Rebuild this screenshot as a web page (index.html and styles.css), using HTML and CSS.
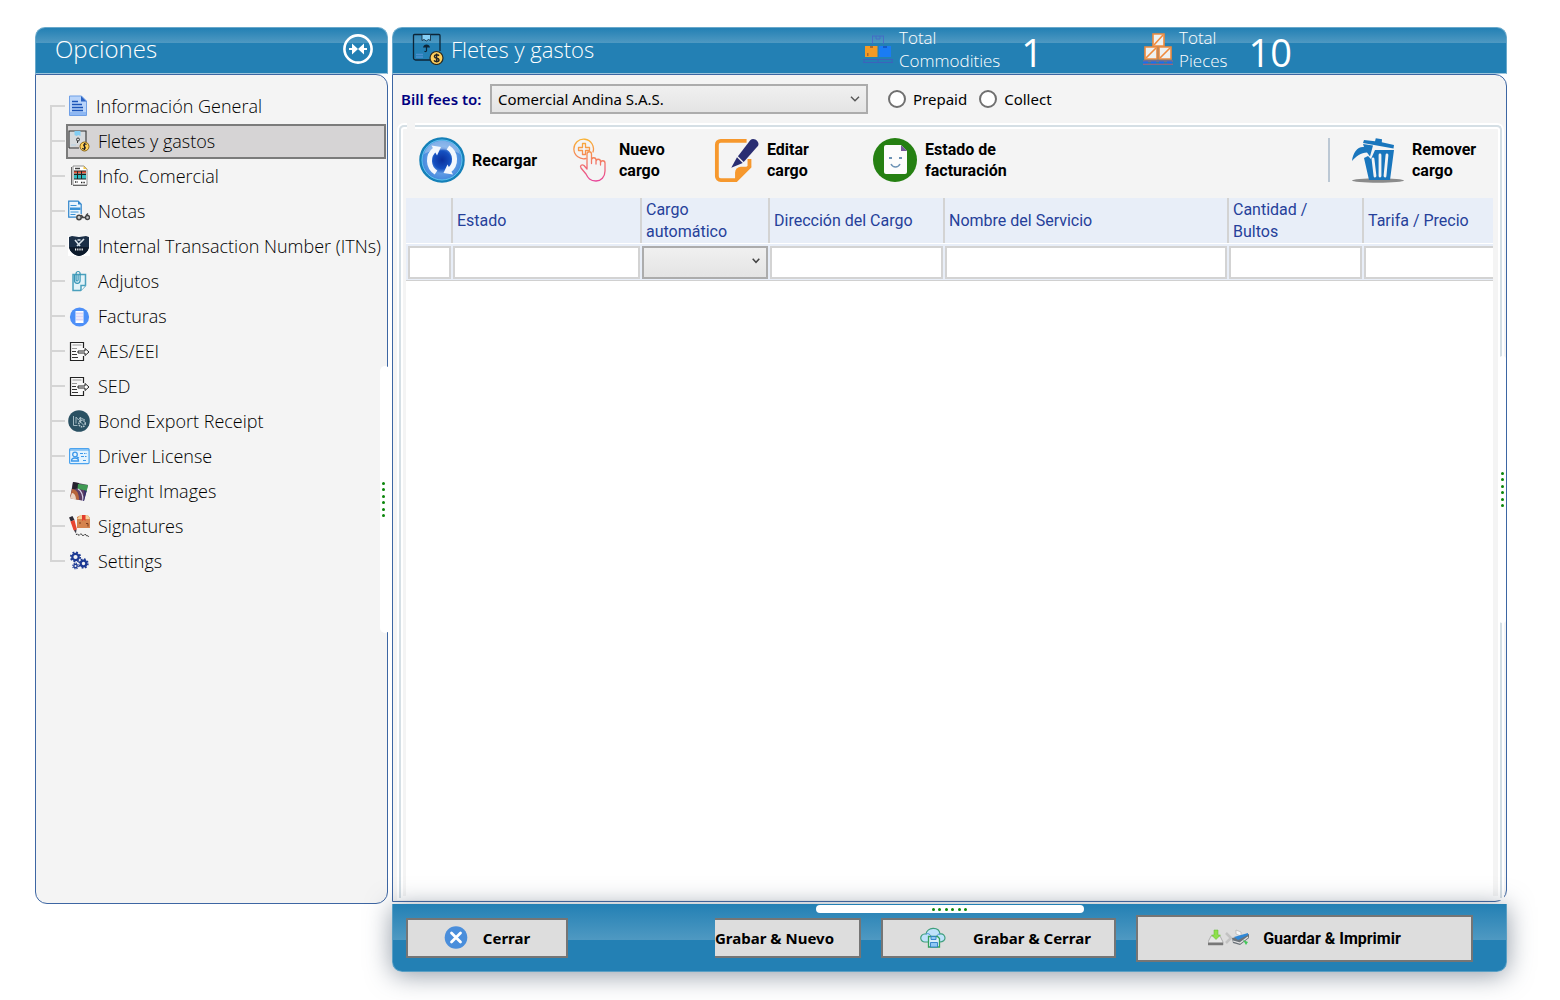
FILE: index.html
```html
<!DOCTYPE html>
<html lang="es">
<head>
<meta charset="utf-8">
<title>Fletes y gastos</title>
<link rel="stylesheet" href="styles.css">
</head>
<body>
<div class="app">
  <aside class="sidebar">
    <header class="bar sidebar-bar">
      <h2 class="bar-title">Opciones</h2>
      <button class="collapse" type="button" aria-label="Contraer">
        <svg width="32" height="32" viewBox="0 0 32 32"><circle cx="16" cy="16" r="13.6" fill="none" stroke="#fff" stroke-width="2.6"/><path d="M7 15h3v-4.500l6 5.500-6 5.500V17H7zM25 15h-3v-4.500L16 16l6 5.500V17h3z" fill="#fff"/></svg>
      </button>
    </header>
    <nav class="side-panel">
      <ul class="tree">
        <li><a class="item" href="#"><svg class="narrow" viewBox="0 0 20 22"><path d="M1.500 1h12l5 5v14.500h-17z" fill="#b9d4fa" stroke="#6f9fe6"/><path d="M13 1v5.500h5.500z" fill="#2b63c4"/><path d="M2 17h16v3H2z" fill="#8fb8f3"/><path d="M4 6.500h6M4 9.500h10M4 12.500h11M4 15.500h11" stroke="#1c54b8" stroke-width="1.300"/></svg>Información General</a></li>
        <li><a class="item selected" href="#"><svg viewBox="0 0 22 22"><path d="M1 18V1h17v11M1 18h10" fill="#d6dadd" stroke="#333" stroke-width="1.100"/><path d="M6.500 1h6v5l-2-1-2 1-2-1z" fill="#83cdf2"/><circle cx="10" cy="9.500" r="1.500" fill="none" stroke="#333"/><path d="M9.500 11v2" stroke="#333"/><path d="M3 15h5" stroke="#b4cfe2"/><circle cx="16.500" cy="16.500" r="4.500" fill="#ffd05a" stroke="#7d5a10" stroke-width=".9"/><path d="M18.500 14.500c-2-1.500-4 .5-2 2s0 3.500-2.200 1.800M16.500 13v7" fill="none" stroke="#222" stroke-width="1.100"/></svg>Fletes y gastos</a></li>
        <li><a class="item" href="#"><svg viewBox="0 0 22 22"><path d="M5 1h11l3 3v16H5z" fill="#fff" stroke="#777" stroke-width=".8"/><path d="M3.500 2v18M5 20.500h14" stroke="#666"/><path d="M7 3.500h5" stroke="#444" stroke-width="1.500"/><path d="M15.500 1l3.500 3h-3.500z" fill="#f6c744"/><path d="M6 6h12v8H6z" fill="#2fbcc0"/><path d="M6 6h12v2.500H6z" fill="#f0573c"/><path d="M6 6h12M6 9.500h12M6 14h12M9.500 6v8M13.500 6v8" stroke="#222"/><path d="M7 17h3M13 17.500h4" stroke="#222" stroke-width="1.600" stroke-dasharray="1 .6"/></svg>Info. Comercial</a></li>
        <li><a class="item" href="#"><svg viewBox="0 0 22 22"><path d="M.7 1.200h9.500l3 3v13H.7z" fill="#eaf5fd" stroke="#3186cc" stroke-width="1.200"/><path d="M10 1v3.500h3.500z" fill="#3186cc"/><path d="M2.500 5.500h6M2.500 12h8M2.500 14.500h5" stroke="#3a92d6"/><path d="M2 7.500h10.500v2.500H2z" fill="#3a92d6"/><path d="M8 14h6v6H8z" fill="#f4f4f4"/><circle cx="11" cy="17.500" r="2.200" fill="#ccc" stroke="#444" stroke-width="1.500"/><circle cx="19.500" cy="17.500" r="2" fill="#ccc" stroke="#444" stroke-width="1.400"/><path d="M13.500 17.500h4M13 15l2 2M18 15.500l2-2" stroke="#444" stroke-width="1.400"/></svg>Notas</a></li>
        <li><a class="item" href="#"><svg viewBox="0 0 22 22"><path d="M0 1h22v20H0z" fill="#fff"/><path d="M1 2l3-1 7 1 7-1 3 1v10c-1 5-5 8-10 9C6 20 2 17 1 12z" fill="#1b2f47"/><path d="M1 12c1 5 5 8 10 9 5-1 9-4 10-9z" fill="#0d1a2b"/><path d="M7 5l5 6M16 4l-7 7M9.500 5h3" stroke="#d8e2ea" stroke-width="1.600"/><path d="M7 14.500h8" stroke="#fff" stroke-width="2" stroke-dasharray="1.200 1"/></svg>Internal Transaction Number (ITNs)</a></li>
        <li><a class="item" href="#"><svg viewBox="0 0 22 22"><path d="M5 4.500h12.500v11l-5 5H5z" fill="#e3f3f9" stroke="#4aa0bd" stroke-width="1.500"/><path d="M17.500 15.500h-4.500v5" fill="#fff" stroke="#4aa0bd" stroke-width="1.500"/><path d="M6.500 5v5.500a2.800 2.800 0 0 0 5.600 0V3.500a2 2 0 0 0-4 0v6.500a1 1 0 0 0 2 0V5" fill="none" stroke="#3795b6" stroke-width="1.200"/></svg>Adjutos</a></li>
        <li><a class="item" href="#"><svg viewBox="0 0 22 22"><circle cx="11.500" cy="12" r="9.600" fill="#4d8ff8"/><path d="M7.500 6h8v12h-8z" fill="#fff"/><path d="M8 8.500h7M8 11.500h7M8 14.500h7" stroke="#ddd6f6" stroke-width="2"/></svg>Facturas</a></li>
        <li><a class="item" href="#"><svg viewBox="0 0 22 22"><path d="M15.500 8V2.500h-13v18h13V16" fill="#f9f9f9" stroke="#222" stroke-width="1.200"/><path d="M4.500 5h9M4 8.500h5" stroke="#999"/><path d="M4 11.500h4M4 14.500h5M4 17.500h6" stroke="#333" stroke-width="1.200"/><path d="M10 11h7V8.500l4 3.500-4 3.500V13h-7z" fill="#fff" stroke="#222"/></svg>AES/EEI</a></li>
        <li><a class="item" href="#"><svg viewBox="0 0 22 22"><path d="M15.500 8V2.500h-13v18h13V16" fill="#f9f9f9" stroke="#222" stroke-width="1.200"/><path d="M4.500 5h9M4 8.500h5" stroke="#999"/><path d="M4 11.500h4M4 14.500h5M4 17.500h6" stroke="#333" stroke-width="1.200"/><path d="M10 11h7V8.500l4 3.500-4 3.500V13h-7z" fill="#fff" stroke="#222"/></svg>SED</a></li>
        <li><a class="item" href="#"><svg viewBox="0 0 22 22"><circle cx="11" cy="11" r="10.800" fill="#2a5163"/><path d="M5.500 6v9.500h4M8 7v6.500M8 7l2.500 3 2-3v6" stroke="#9fb7c0" fill="none"/><circle cx="14" cy="13.500" r="3.200" fill="none" stroke="#b7c8cf" stroke-dasharray="1.500 .8" stroke-width="1.500"/><path d="M13 8l4 2M12.500 12l3 3" stroke="#9fb7c0"/></svg>Bond Export Receipt</a></li>
        <li><a class="item" href="#"><svg viewBox="0 0 22 22"><rect x="1.600" y="3.600" width="19.500" height="15" rx="1" fill="#e4f3fe" stroke="#4ba3ee" stroke-width="1.200"/><path d="M2 5h19" stroke="#4ba3ee"/><circle cx="7" cy="9.500" r="2.300" fill="none" stroke="#3b98ea" stroke-width="1.300"/><path d="M3.500 16c0-4 7-4 7 0zM9 12l2 1" fill="none" stroke="#3b98ea" stroke-width="1.300"/><path d="M12 8.500h7M13 11.500h6M15 15.500h4" stroke="#3b98ea" stroke-width="1.200" stroke-dasharray="3 1 1.500 1"/></svg>Driver License</a></li>
        <li><a class="item" href="#"><svg viewBox="0 0 22 22"><path d="M5 2l15 3-4 16-14-3z" fill="#5b3d63"/><path d="M5 2l6 1-1 5-6 2z" fill="#25222e"/><path d="M10 4l10 1-1.500 7c-3-3-6-2-9-3z" fill="#3f9a53"/><path d="M4 9c5 0 7 5 7 11l-9-2z" fill="#b8643a"/><path d="M4 13c3 0 4 4 4 7l-6-2z" fill="#ead3c4"/><path d="M10 9c4 2 5 6 5 12" fill="none" stroke="#d7d3ea" stroke-width="1.300"/><path d="M16 10c1 3 0 7-1 11l1-.2L18.700 11z" fill="#32306b"/></svg>Freight Images</a></li>
        <li><a class="item" href="#"><svg viewBox="0 0 22 22"><path d="M9 2l3-1.500h8L22 3v10H9z" fill="#d5834e"/><path d="M9 4l3-3.500h8L22 4z" fill="#f6cf97"/><path d="M14 0h3.500v6l-1.700-1.500L14 6z" fill="#e23b2c"/><path d="M11 8h2M18 8.500h2v3" stroke="#7d3d1e" fill="none"/><path d="M1 2.500L4.500 1l2 4-3.700 1.500z" fill="#2d2a36"/><path d="M2.500 6.500l4-1.500 2.300 9-1.300 2.500-2-1.500z" fill="#e8442f"/><path d="M6 15.500l2.500-1-.5 4z" fill="#3b3b48"/><path d="M8 19.500c2-1 2 1.500 4 0s2 2 4 .5 2 1 5 1.500" stroke="#222" fill="none" stroke-width="1.200" stroke-dasharray="1.500 .8"/></svg>Signatures</a></li>
        <li><a class="item" href="#"><svg viewBox="0 0 22 22" fill="none" stroke="#1d3a94"><circle cx="7.500" cy="7" r="3.200" stroke-width="2.200"/><circle cx="7.500" cy="7" r="4.700" stroke-width="1.800" stroke-dasharray="1.850"/><circle cx="15.500" cy="13.500" r="2.800" stroke-width="2.200"/><circle cx="15.500" cy="13.500" r="4.300" stroke-width="1.800" stroke-dasharray="1.690"/><circle cx="7.500" cy="16" r="1.700" stroke-width="1.400"/><circle cx="7.500" cy="16" r="2.800" stroke-width="1.200" stroke-dasharray="1.100"/></svg>Settings</a></li>
      </ul>
      <div class="grip grip-side"><i></i><i></i><i></i><i></i><i></i><i></i></div>
    </nav>
  </aside>

  <main class="main">
    <header class="bar main-bar">
      <div class="heading">
        <svg width="32" height="32" viewBox="0 0 32 32"><path d="M21 27H3.500a2 2 0 0 1-2-2V2.500a1 1 0 0 1 1-1h24.500a1 1 0 0 1 1 1V18" fill="none" stroke="#0d2537" stroke-width="1.300"/><path d="M10 1.500h8.500v6l-2-1-2.200 1.500L12 6.500l-2 1z" fill="#86d0f6" stroke="#0d2537" stroke-width=".8"/><path d="M14.500 12v6a1.200 1.200 0 0 1-2 0" fill="none" stroke="#0d2537" stroke-width="1.200"/><path d="M11 14.500c.5-4 6.500-4 7 0z" fill="#0d2537"/><path d="M4 21.500h7M4 24h7" stroke="#4c8fd0" stroke-width="1.300"/><circle cx="24.500" cy="25" r="6.500" fill="#ffcf5c" stroke="#2a2a20" stroke-width="1.200"/><path d="M27 22.800c-1.500-1.800-5-1-4.500 1s4.300 1 4.500 3-3.500 2.500-5 .5M24.600 20.500v9" fill="none" stroke="#222" stroke-width="1.400"/></svg>
        <h1 class="page-title">Fletes y gastos</h1>
      </div>
      <div class="total">
        <svg width="32" height="32" viewBox="0 0 32 32"><path d="M10 3h12M10.500 3v8M21.500 3v8M14 3v3h4V3" fill="none" stroke="#4a62c8" stroke-width=".9" opacity=".8"/><path d="M3 13h12.500v11H3z" fill="#f59a23"/><path d="M8 13h3v2H8zM5 20h1.500v3H5z" fill="#a9682f"/><path d="M17 13h12v11H17z" fill="#1a7cf4"/><path d="M21 13h4v2h-4z" fill="#1459c6"/><path d="M1 26.500h30M1 29.500h30M2 27v2M16 27v2M30 27v2" stroke="#3f5fbd" stroke-width=".9"/></svg>
        <span class="total-label">Total<br>Commodities</span>
        <output class="total-value">1</output>
      </div>
      <div class="total">
        <svg width="32" height="32" viewBox="0 0 32 32"><g fill="#eef1f0" stroke="#f08a3c" stroke-width="1.600"><path d="M11 1h11v12H11z"/><path d="M3 14h12v12H3zM17 14h12v12H17z"/><path d="M12 12l9-10M4 25l10-10M18 25l10-10"/></g><path d="M1 28h30" stroke="#a0667c" stroke-width="1.200"/><path d="M1 29.500h30" stroke="#1a6cf0" stroke-width="2" stroke-dasharray="5 3"/><path d="M1 31.300h30" stroke="#a0667c" stroke-width="1.200"/></svg>
        <span class="total-label">Total<br>Pieces</span>
        <output class="total-value">10</output>
      </div>
    </header>

    <section class="main-panel">
      <form class="billing">
        <label class="bill-label" for="bill">Bill fees to:</label>
        <span class="select bill-select">
          <select id="bill"><option>Comercial Andina S.A.S.</option></select>
          <svg width="10" height="6" viewBox="0 0 10 6"><path d="M1 .8l4 4 4-4" fill="none" stroke="#555" stroke-width="1.400"/></svg>
        </span>
        <label class="radio"><input type="radio" name="terms">Prepaid</label>
        <label class="radio"><input type="radio" name="terms">Collect</label>
      </form>

      <div class="group">
        <div class="toolbar">
          <button class="tool reload" type="button">
            <svg width="46" height="46" viewBox="0 0 46 46"><defs><radialGradient id="orb" cx=".5" cy=".5" r=".5"><stop offset="0" stop-color="#0a2f9c"/><stop offset=".4" stop-color="#1550c0"/><stop offset=".62" stop-color="#5f9be4"/><stop offset="1" stop-color="#3f86dc"/></radialGradient></defs><circle cx="23" cy="23" r="21.500" fill="url(#orb)" stroke="#1580b8" stroke-width="2.500"/><circle cx="23" cy="23" r="20" fill="none" stroke="#5cc4ee"/><path d="M5 17C8 6 20 1 30 5s10 8 11 12c-9-6-25-6-36 0z" fill="#fff" opacity=".3"/><path d="M17 35.500A14 14 0 0 1 16 12.500" fill="none" stroke="#f3f7fd" stroke-width="5"/><path d="M12.500 8.500l9.500 1.500-4 8.500z" fill="#f3f7fd"/><path d="M29 10.500A14 14 0 0 1 30 33.500" fill="none" stroke="#f3f7fd" stroke-width="5"/><path d="M34 37.500L24.500 36l4-8.500z" fill="#f3f7fd"/></svg>
            Recargar
          </button>
          <button class="tool create" type="button">
            <svg width="34" height="46" viewBox="0 0 34 46" fill="none" stroke-width="1.300" stroke-linejoin="round" stroke-linecap="round"><defs><linearGradient id="hand" gradientUnits="userSpaceOnUse" x1="0" y1="2" x2="0" y2="44"><stop offset="0" stop-color="#f9b233"/><stop offset=".45" stop-color="#f5835a"/><stop offset="1" stop-color="#e8459a"/></linearGradient></defs><g stroke="url(#hand)"><path d="M13 21.500A9.800 9.800 0 1 1 20 15"/><path d="M9.500 6.500h3v4h4v3h-4v4h-3v-4h-4v-3h4z"/><path d="M14 32V17a2 2 0 0 1 4.500 0v9.500V23a2.200 2.200 0 0 1 4.500 0v4-2.500a2.200 2.200 0 0 1 4.500 0V28v-2a2.200 2.200 0 0 1 4.500 0v8c0 6-4 10-9 10-6 0-8-3-10-7l-5-6c-1.500-2.500 1-4 3-2.500z"/></g></svg>
            Nuevo cargo
          </button>
          <button class="tool edit" type="button">
            <svg width="46" height="46" viewBox="0 0 48 46"><path d="M34 3H7a4 4 0 0 0-4 4v33a4 4 0 0 0 4 4h16l14-14V22" fill="none" stroke="#f6982d" stroke-width="4"/><path d="M22 46V36a6 6 0 0 1 6-6h11z" fill="#f6982d"/><path d="M38 2c4-3 10 2 8 6L31 25l-6-6z" fill="#2a2e72"/><path d="M24 20l6 6-12 5z" fill="#2a2e72"/></svg>
            Editar cargo
          </button>
          <button class="tool status" type="button">
            <svg width="46" height="46" viewBox="0 0 46 46"><circle cx="23" cy="23" r="22" fill="#258012"/><path d="M14 8h15l6 6v21a2 2 0 0 1-2 2H14a2 2 0 0 1-2-2V10a2 2 0 0 1 2-2z" fill="#fcfcfc"/><path d="M29 8l6 6h-6z" fill="#76599a"/><path d="M17 21h3M27 21h3" stroke="#6c92b5" stroke-width="2"/><path d="M19 27c2 4 7 4 9 0" fill="none" stroke="#6c92b5" stroke-width="1.500"/></svg>
            Estado de facturación
          </button>
          <span class="divider"></span>
          <button class="tool remove" type="button">
            <svg width="54" height="46" viewBox="0 0 54 46"><ellipse cx="27" cy="43.500" rx="26" ry="2.200" fill="#8b8b8b"/><path d="M13 3l11 1.300.8-3 6.200.9-.2 3L43 8l-.5 3.500L12 6z" fill="#1976bd"/><path d="M1 24C2 15 7 9 13 10l-1-3 10 1.500-3 11-3-4C10 16 5 19 1 24z" fill="#1976bd"/><path d="M24 13h19l-4 30H18l-5-22 4-2 3 3z" fill="#1976bd"/><path d="M22 22l2 17M29 18v21M36 18l-2 21" stroke="#f4f4f4" stroke-width="2.800" stroke-linecap="round"/></svg>
            Remover cargo
          </button>
        </div>

        <div class="grid">
          <table>
            <colgroup><col class="c-mark"><col class="c-state"><col class="c-auto"><col class="c-dir"><col><col class="c-qty"><col class="c-price"></colgroup>
            <thead>
              <tr class="heads"><th></th><th>Estado</th><th>Cargo automático</th><th>Dirección del Cargo</th><th>Nombre del Servicio</th><th>Cantidad /<br>Bultos</th><th>Tarifa / Precio</th></tr>
            </thead>
            <tbody>
              <tr class="filters">
                <td><input type="text" aria-label="Marca"></td>
                <td><input type="text" aria-label="Estado"></td>
                <td><span class="select auto-select"><select aria-label="Cargo automático"><option></option></select><svg width="8" height="6" viewBox="0 0 8 6"><path d="M.7 .8L4 4.300 7.300 .8" fill="none" stroke="#444" stroke-width="1.500"/></svg></span></td>
                <td><input type="text" aria-label="Dirección del Cargo"></td>
                <td><input type="text" aria-label="Nombre del Servicio"></td>
                <td><input type="text" aria-label="Cantidad / Bultos"></td>
                <td><input type="text" aria-label="Tarifa / Precio"></td>
              </tr>
            </tbody>
          </table>
        </div>
      </div>
      <div class="grip grip-main"><i></i><i></i><i></i><i></i><i></i><i></i></div>
    </section>

    <footer class="actions">
      <button class="action close" type="button">
        <svg width="24" height="24" viewBox="0 0 24 24"><circle cx="12" cy="11.500" r="11.300" fill="#4a8edb"/><path d="M7.500 7l9 9M16.500 7l-9 9" stroke="#fff" stroke-width="2.800" stroke-linecap="round"/></svg>
        Cerrar
      </button>
      <button class="action save-new" type="button">Grabar &amp; Nuevo</button>
      <button class="action save-close" type="button">
        <svg width="26" height="22" viewBox="0 0 26 22"><path d="M7 15H5a4 4 0 0 1-.5-8C5 7 6 7 6 7c1-7 13-8 14 0 3-1 5 2 5 4s-2 4-5 4z" fill="#bfe2fb" stroke="#3f9f7c" stroke-width="1.200"/><path d="M6 7c2-1 4 0 5 2M20 7c-2 0-3 1-3 2" stroke="#4a90d9" fill="none"/><path d="M8.500 9.500h9l2 2V20h-11z" fill="#d8eefb" stroke="#34a05c" stroke-width="1.300"/><path d="M11 9.500h5v3h-5zM10.500 15.500h7V20h-7z" fill="#8fc8f5" stroke="#2e7fc6" stroke-width=".9"/></svg>
        Grabar &amp; Cerrar
      </button>
      <button class="action save-print" type="button">
        <svg width="42" height="18" viewBox="0 0 42 18"><path d="M3 7h9l3 6v3H0v-3z" fill="#e6e6e6" stroke="#999" stroke-width=".7"/><path d="M0 13.500h15V16H0z" fill="#777"/><path d="M6 1h4v5h2.500L8 10.500 3.500 6H6z" fill="#8fe04c" stroke="#5fb82c" stroke-width=".5"/><path d="M18 4l5 5-5 5" fill="none" stroke="#c2c2c2" stroke-width="2.500"/><path d="M28 1l5 2v4l-5-2z" fill="#f6f6f6" stroke="#aaa" stroke-width=".6"/><path d="M24 9l5-1 12-3v4l-9 7-7-2z" fill="#6b7278"/><path d="M26 8l14-4v2l-10 5z" fill="#2f87d6"/><path d="M25 12l7 2 8-6" stroke="#e4e4e4" stroke-width="1.300" fill="none"/><path d="M35 11l5 2-2 3z" fill="#44c85a"/></svg>
        Guardar &amp; Imprimir
      </button>
      <div class="grip grip-foot"><i></i><i></i><i></i><i></i><i></i><i></i></div>
    </footer>
  </main>
</div>
</body>
</html>
```
FILE: styles.css
```css
* { box-sizing: border-box; }

body {
  margin: 0;
  background: #fff;
  color: #000;
  font-family: "Open Sans", "Noto Sans", sans-serif;
}

button, input, select { font: inherit; color: inherit; }
h1, h2, ul { margin: 0; padding: 0; font-weight: inherit; }
svg { flex: none; display: block; }

.app {
  display: flex;
  gap: 4px;
  min-height: 100vh;
  padding: 27px 53px 28px 35px;
}

/* Blue title bars */
.bar {
  display: flex;
  align-items: center;
  flex: none;
  height: 47px;
  padding-bottom: 3px;
  border: 1px solid #6aa9cb;
  border-bottom-color: #9cc5dc;
  border-radius: 10px 10px 0 0;
  background: linear-gradient(#2380b4, #4f99c2 15px, #2380b4 15px);
  color: #fff;
}

.bar-title { font-size: 24px; line-height: 32px; font-weight: 300; }
.page-title { font-size: 22px; line-height: 32px; font-weight: 300; }

/* Sidebar */
.sidebar {
  display: flex;
  flex-direction: column;
  flex: none;
  width: 353px;
  margin-bottom: 68px;
}

.sidebar-bar { justify-content: space-between; padding-left: 19px; padding-right: 13px; }
.collapse { padding: 0; border: 0; background: none; }

.side-panel {
  position: relative;
  flex: 1;
  padding: 14px 1px 0 14px;
  border: 1px solid #3d66a3;
  border-radius: 0 12px 12px 12px;
  background: #f4f4f4;
}

.tree { list-style: none; font-size: 18px; line-height: 24px; font-weight: 300; }

.tree li { position: relative; padding-left: 16px; }
.tree li::before {
  content: "";
  position: absolute;
  left: 0;
  top: 0;
  bottom: 0;
  border-left: 2px solid #d5d5d5;
}
.tree li:first-child::before { top: 16px; }
.tree li:last-child::before { bottom: 17px; }
.tree li::after {
  content: "";
  position: absolute;
  left: 0;
  top: 16px;
  width: 15px;
  border-top: 2px solid #d5d5d5;
}

.item {
  display: flex;
  align-items: center;
  gap: 8px;
  height: 35px;
  padding: 0 0 2px 1px;
  border: 1px solid transparent;
  color: #000;
  text-decoration: none;
  white-space: nowrap;
}
.item svg { width: 22px; height: 22px; }
.item .narrow { width: 20px; }
.selected { border: 2px solid #7b7b7b; padding-left: 0; background: #d6d4d5; }

/* Splitter grips */
.grip {
  position: absolute;
  display: flex;
  align-items: center;
  justify-content: space-between;
  border-radius: 5px;
  background: #fff;
}
.grip i { width: 3px; height: 3px; border-radius: 2px; background: #0a860a; }
.grip-side, .grip-main { flex-direction: column; height: 267px; padding: 116px 0; }
.grip-side { right: -3px; top: calc(50% - 123px); width: 10px; padding-right: 3px; }
.grip-main { right: 0; top: calc(50% - 132px); width: 7px; }
.grip-foot { left: calc(50% - 134px); top: 1px; width: 268px; height: 8px; padding: 0 116px; }

/* Main column */
.main { display: flex; flex-direction: column; flex: 1; min-width: 0; }

.main-bar { padding-left: 19px; }
.heading { display: flex; align-items: center; gap: 7px; width: 450px; }
.total { display: flex; align-items: center; gap: 5px; width: 280px; }
.total-label { font-size: 17px; line-height: 23px; font-weight: 300; }
.total-value { margin: 6px 0 0 16px; font-size: 38px; line-height: 40px; }

.main-panel {
  position: relative;
  display: flex;
  flex-direction: column;
  flex: 1;
  margin-bottom: 2px;
  padding: 9px 4px 3px 6px;
  border: 1px solid #3d66a3;
  border-radius: 0 12px 12px 0;
  background: #f4f4f4;
}

.billing { display: flex; align-items: center; font: 15px/20px "Noto Sans", sans-serif; }
.bill-label { width: 91px; padding-left: 2px; color: #000080; font-weight: 600; }

.select { position: relative; display: block; }
.select select {
  width: 100%;
  appearance: none;
  border: 2px solid #acacac;
  border-radius: 0;
  background: linear-gradient(#f0f0f0, #e4e4e4);
}
.select svg { position: absolute; top: 12px; right: 8px; }

.bill-select { width: 378px; margin-right: 20px; }
.bill-select select { height: 30px; padding: 0 6px; }

.radio { display: flex; align-items: center; gap: 7px; margin-right: 12px; }
.radio input {
  appearance: none;
  width: 18px;
  height: 18px;
  margin: 0;
  border: 2px solid #707070;
  border-radius: 9px;
  background: #fff;
}

.group {
  position: relative;
  display: flex;
  flex-direction: column;
  flex: 1;
  margin-top: 11px;
  padding: 4px 7px 0 5px;
  border: 2px solid #d5dfe5;
  border-bottom: 0;
  border-radius: 5px 5px 0 0;
  box-shadow: 0 0 0 2px #fff, inset 0 0 0 2px #fff;
}
/* empty caption gap in the frame */
.group::before {
  content: "";
  position: absolute;
  left: 6px;
  top: -4px;
  width: 8px;
  height: 6px;
  background: #f4f4f4;
}

.toolbar {
  display: flex;
  align-items: center;
  height: 67px;
  padding: 0 0 9px 13px;
}
.tool {
  display: flex;
  align-items: center;
  gap: 7px;
  padding: 0;
  border: 0;
  background: none;
  font: 700 16px/21px Roboto, sans-serif;
  text-align: left;
}
.reload { width: 154px; }
.create { width: 141px; gap: 12px; padding-right: 40px; }
.edit { width: 158px; padding-right: 45px; }
.status { width: 190px; }
.divider { width: 2px; height: 44px; margin: 0 21px 0 auto; background: #bcc8d4; }
.remove { width: 142px; }

.grid { flex: 1; overflow: hidden; background: #fff; }
.grid table { width: 100%; border-collapse: separate; border-spacing: 0; table-layout: fixed; }
.c-mark { width: 47px; }
.c-state { width: 189px; }
.c-auto { width: 128px; }
.c-dir { width: 175px; }
.c-qty { width: 135px; }
.c-price { width: 129px; }

.heads th {
  height: 45px;
  padding: 1px 4px 0;
  border-right: 2px solid #d3d3d3;
  background: #e8eef8;
  color: #25409a;
  font: 400 16px/22px Roboto, sans-serif;
  text-align: left;
}
.heads th:last-child { border-right: 0; }

.filters td {
  padding: 3px 2px 1px 0;
  border-bottom: 1px solid #d0d0d0;
  background: linear-gradient(#fff 1px, #e8eef8 1px);
}
.filters td:first-child { padding-left: 2px; }
.filters td:last-child { padding-right: 0; }
.filters input {
  display: block;
  width: 100%;
  height: 33px;
  padding: 0 4px;
  border: 2px solid #d3d3d3;
  background: #fff;
}
.filters td:last-child input { border-right: 0; }
.auto-select select { display: block; height: 33px; }

/* Footer */
.actions {
  position: relative;
  display: flex;
  align-items: center;
  gap: 20px;
  flex: none;
  height: 68px;
  padding: 1px 33px 0 13px;
  border: 1px solid #5a9fc4;
  border-width: 0 1px 1px;
  border-radius: 0 0 10px 10px;
  background: linear-gradient(#2380b4, #4f99c2 36px, #2380b4 36px);
  box-shadow: 0 3px 26px rgba(70, 85, 105, .6);
}
.action {
  display: flex;
  align-items: center;
  justify-content: center;
  height: 40px;
  padding: 0;
  border: 2px solid #757575;
  background: #ddd;
  font: 700 15px/20px "Noto Sans", sans-serif;
  white-space: nowrap;
}
.close { width: 162px; gap: 15px; margin-right: auto; }
.save-new { width: 146px; justify-content: flex-start; border-left: 0; }
.save-close { width: 235px; gap: 27px; padding-left: 14px; }
.save-print { width: 337px; height: 47px; gap: 13px; font: 700 16px/21px Roboto, sans-serif; }
```
